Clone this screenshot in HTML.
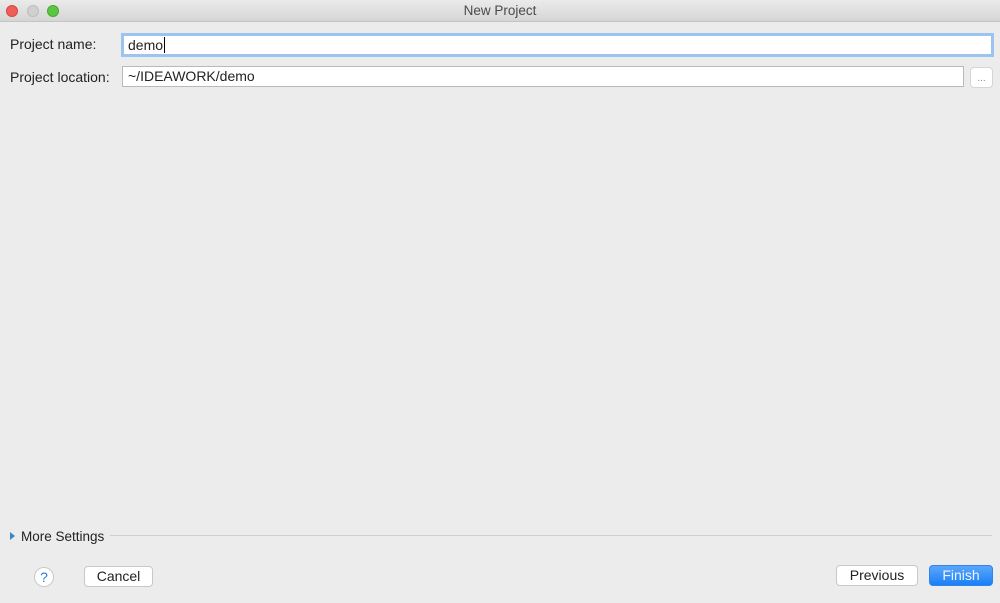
<!DOCTYPE html>
<html><head><style>
*{box-sizing:border-box;margin:0;padding:0}
body{width:1000px;height:603px;background:#ececec;font-family:"Liberation Sans",sans-serif;font-size:14px;color:#222;position:relative;overflow:hidden}
.title{position:absolute;left:0;top:0;width:1000px;height:22px;background:linear-gradient(#ebebeb,#d5d5d5);border-bottom:1px solid #c4c4c4;text-align:center;line-height:22px;font-size:13.5px;color:#4a4a4a}
.dot{position:absolute;top:5px;width:12px;height:12px;border-radius:50%}
.abs{position:absolute}
.field{position:absolute;background:#fff;border:1px solid #b9b9b9;height:21px;line-height:19px;padding-left:5px;font-size:14px}
.btn{position:absolute;background:#fff;border:1px solid #c8c8c8;border-radius:4px;height:21px;line-height:19px;text-align:center;font-size:14px}
</style></head><body>
<div class="title">New Project
<div class="dot" style="left:6px;background:#ee5f58;border:1px solid #d8473f"></div>
<div class="dot" style="left:27px;background:#d0d0d0;border:1px solid #bcbcbc"></div>
<div class="dot" style="left:47px;background:#5bc641;border:1px solid #47a833"></div>
</div>
<div class="abs" style="left:10px;top:36px">Project name:</div>
<div class="field" style="left:121px;top:33px;width:873px;height:24px;border:3px solid #9cc4f0;padding-left:4px;line-height:18px">demo<span style="border-left:1px solid #000;margin-left:1px"></span></div>
<div class="abs" style="left:10px;top:69px">Project location:</div>
<div class="field" style="left:122px;top:66px;width:842px">~/IDEAWORK/demo</div>
<div class="btn" style="left:970px;top:67px;width:23px;height:21px;line-height:21px;font-size:10px;color:#888;border-color:#d5d5d5">...</div>
<div class="abs" style="left:10px;top:532px;width:0;height:0;border-left:5px solid #3a86c8;border-top:4px solid transparent;border-bottom:4px solid transparent"></div>
<div class="abs" style="left:21px;top:529px;font-size:13.5px">More Settings</div>
<div class="abs" style="left:110px;top:535px;width:882px;height:1px;background:#cfcfcf"></div>
<div class="abs" style="left:34px;top:567px;width:20px;height:20px;border-radius:50%;background:#fff;border:1px solid #c8c8c8;text-align:center;line-height:18px;color:#2a7de1;font-size:14px">?</div>
<div class="btn" style="left:84px;top:566px;width:69px">Cancel</div>
<div class="btn" style="left:836px;top:565px;width:82px">Previous</div>
<div class="btn" style="left:929px;top:565px;width:64px;background:linear-gradient(#5ba7fb,#1a7ff6);border-color:#2b84f0;color:#eef5ff">Finish</div>
</body></html>
